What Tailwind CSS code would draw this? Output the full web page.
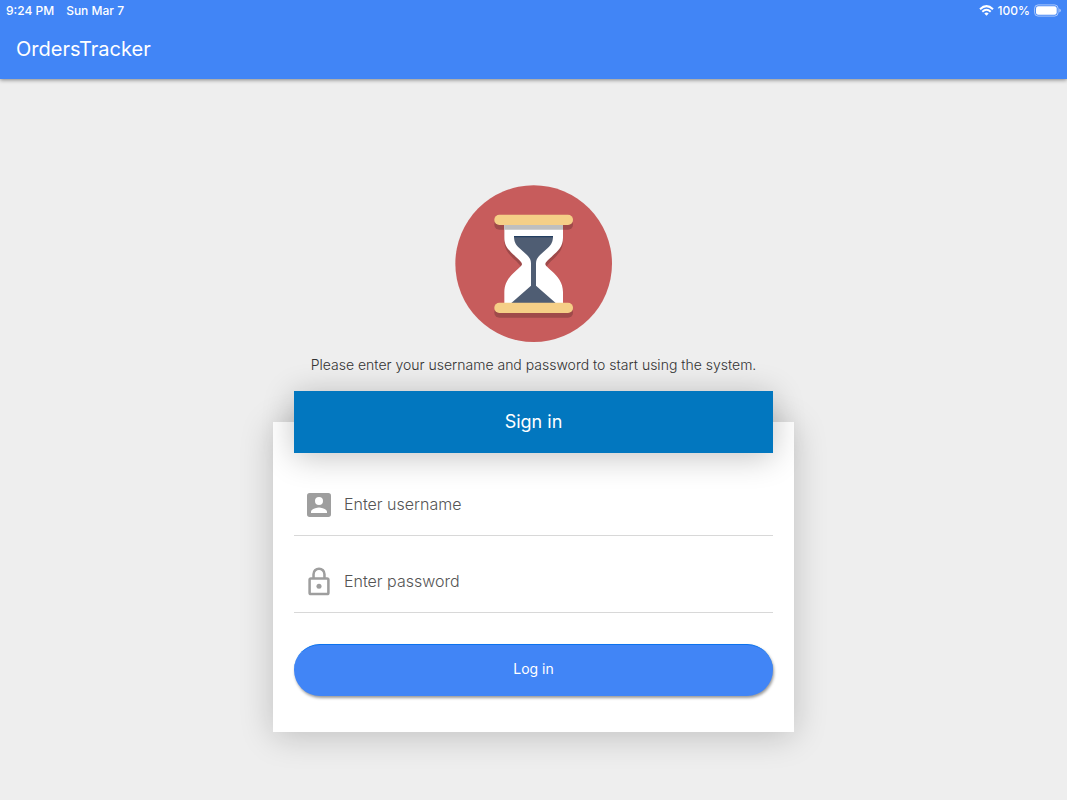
<!DOCTYPE html>
<html lang="en">
<head>
<meta charset="utf-8">
<meta name="viewport" content="width=device-width, initial-scale=1">
<title>OrdersTracker</title>
<script src="https://cdn.jsdelivr.net/npm/@tailwindcss/browser@4"></script>
</head>
<body class="flex min-h-screen flex-col bg-[#eeeeee] font-['Inter',sans-serif]">
<header class="bg-[#4185f6] text-white shadow-[0_1px_4px_rgba(0,0,0,0.45)]">
  <div class="flex h-[21px] items-center justify-between px-[6px] font-medium">
    <div class="flex gap-3 text-xs"><span>9:24 PM</span><span>Sun Mar 7</span></div>
    <div class="flex items-center gap-1 text-xs">
      <svg class="h-[11px] w-[15px]" viewBox="0 0 15 11" fill="none" stroke="currentColor" stroke-width="2" aria-label="Wi-Fi"><path d="M1 4.2Q7.500-1.900 14 4.200M3.300 6.700Q7.500 2.900 11.700 6.700"/><path d="M7.500 10.700L5.300 8.500Q7.500 6.600 9.700 8.500Z" fill="currentColor" stroke="none"/></svg>
      <span>100%</span>
      <svg class="h-[13px] w-[27px]" viewBox="0 0 27 13" aria-label="Battery full"><rect x=".6" y=".9" width="23.500" height="11.200" rx="3.500" fill="none" stroke="#fff" stroke-opacity=".55"/><rect x="2" y="2.300" width="20.700" height="8.400" rx="2.200" fill="#fff"/><path d="M25.300 4.500q1.500.4 1.500 2t-1.500 2z" fill="#fff" fill-opacity=".6"/></svg>
    </div>
  </div>
  <div class="flex h-[58px] items-center px-4 pb-[2px]"><h1 class="text-xl">OrdersTracker</h1></div>
</header>
<main class="mx-auto flex w-full max-w-[521px] flex-col items-center pt-[106px]">
  <svg class="size-[157px]" viewBox="30 29 471 471" aria-label="Hourglass">
    <circle cx="266" cy="265" r="235" fill="#c75c5c"/>
    <g fill="#9f4a4a"><rect x="148" y="132" width="236" height="31" rx="15"/><rect x="148" y="396" width="236" height="31" rx="15"/><path d="M178 150V198C178 225 195 240 214 258Q225 268 229 278L266 265L303 278Q307 268 318 258C337 240 354 225 354 198V150Z"/></g>
    <path d="M178 145H354V187C354 214 338 227 320 244C311 252 301 261 301 266C301 271 311 279 320 287C338 303 354 322 354 350V390H178V350C178 322 194 303 212 287C221 279 231 271 231 266C231 261 221 252 212 244C194 227 178 214 178 187Z" fill="#fff"/>
    <path d="M178 145H354V163H178Z" fill="#bfbfbf"/>
    <path d="M207 182H324C324 198 320 207 309 217L285 239Q273 250 273 264V331L332 383H199L258 331V264Q258 250 246 239L222 217C211 207 207 198 207 182Z" fill="#4f5d73"/>
    <path d="M207 182H324V186H207Z" fill="#233f61"/>
    <g fill="#f5cf87"><rect x="148" y="118" width="236" height="31" rx="15"/><rect x="148" y="382" width="236" height="31" rx="15"/></g>
  </svg>
  <p class="mt-[13px] text-center text-sm font-light text-[#333]">Please enter your username and password to start using the system.</p>
  <form class="mt-[47px] w-full bg-white px-[21px] pb-9 shadow-[0_4px_32px_rgba(0,0,0,0.2)]">
    <h2 class="-mt-[31px] mb-[6px] flex h-[62px] items-center justify-center bg-[#0277bf] text-lg text-white shadow-[0_4px_32px_rgba(0,0,0,0.24)]">Sign in</h2>
    <div class="flex h-[77px] items-end border-b border-[#d8d8d8] pb-[14px] pl-[9px]">
      <label for="username" class="text-[#9e9e9e]"><svg class="size-8" viewBox="0 0 24 24" fill="currentColor" role="img" aria-label="Username"><path d="M3 5v14a2 2 0 0 0 2 2h14a2 2 0 0 0 2-2V5a2 2 0 0 0-2-2H5a2 2 0 0 0-2 2zm12 4a3 3 0 1 1-6 0 3 3 0 0 1 6 0zm-9 8c0-2 4-3.100 6-3.100s6 1.100 6 3.100v1H6z"/></svg></label>
      <input id="username" type="text" placeholder="Enter username" class="ml-[9px] h-8 min-w-0 flex-1 bg-transparent pb-[2px] text-base font-light text-[#333] outline-none placeholder:text-[#555]">
    </div>
    <div class="flex h-[77px] items-end border-b border-[#d8d8d8] pb-[14px] pl-[9px]">
      <label for="password" class="text-[#9e9e9e]"><svg class="size-8" viewBox="0 0 24 24" fill="none" stroke="currentColor" stroke-width="1.900" role="img" aria-label="Password"><rect x="4.950" y="9.400" width="14.100" height="11.600" rx="1"/><path d="M7.900 9.400V6.100a4.100 4.100 0 0 1 8.200 0v3.300"/><circle cx="12" cy="15.200" r="1.900" fill="currentColor" stroke="none"/></svg></label>
      <input id="password" type="password" placeholder="Enter password" class="ml-[9px] h-8 min-w-0 flex-1 bg-transparent pb-[2px] text-base font-light text-[#333] outline-none placeholder:text-[#555]">
    </div>
    <button type="submit" class="mt-[31px] flex h-[52px] w-full items-center justify-center rounded-full border-t border-[#0b72ee] bg-[#4185f6] pb-[3px] text-sm text-white shadow-[1px_2px_3px_rgba(0,0,0,0.4)]">Log in</button>
  </form>
</main>
</body>
</html>
